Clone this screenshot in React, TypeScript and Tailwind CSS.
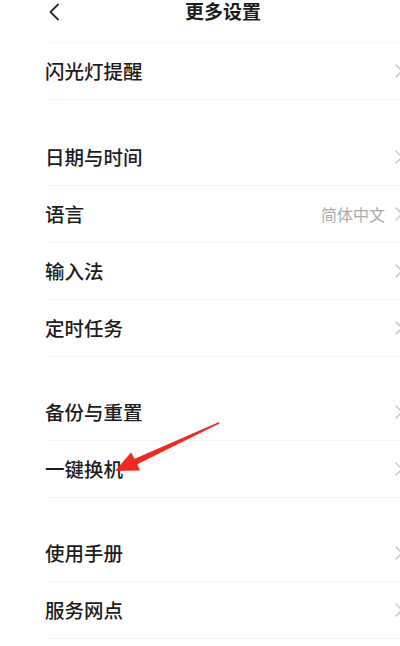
type Row = { label: string; value?: string };

const SECTIONS: Row[][] = [
  [{ label: '闪光灯提醒' }],
  [{ label: '日期与时间' }, { label: '语言', value: '简体中文' }, { label: '输入法' }, { label: '定时任务' }],
  [{ label: '备份与重置' }, { label: '一键换机' }],
  [{ label: '使用手册' }, { label: '服务网点' }]
];

const GAPS = ['h-0', 'h-[29px]', 'h-[27px]', 'h-[27px]'];

function Chevron() {
  return (
    <svg width="10" height="16" viewBox="0 0 10 16" className="mr-[-4px] shrink-0">
      <path d="M2 2 L8 8 L2 14" fill="none" stroke="#cccccc" strokeWidth="1.6" strokeLinecap="round" strokeLinejoin="round" />
    </svg>
  );
}

function SettingRow({ row }: { row: Row }) {
  return (
    <div className="flex h-[57px] items-center border-b border-[#f6f6f6]">
      <span className="text-[19.5px] font-medium leading-none text-[#1c1c1c]">{row.label}</span>
      <div className="ml-auto flex items-center gap-[9px]">
        {row.value ? <span className="text-[16px] leading-none text-[#ababab]">{row.value}</span> : null}
        <Chevron />
      </div>
    </div>
  );
}

export default function App() {
  return (
    <div
      className="relative h-[646px] w-[400px] overflow-hidden bg-white"
      style={{ fontFamily: '"Noto Sans CJK SC", "Noto Sans", sans-serif' }}
    >
      <div className="relative ml-[45px] flex h-[43px] items-start border-b border-[#f7f7f7]">
        <svg width="14" height="18" viewBox="0 0 14 18" className="mt-[3px] ml-[2px]">
          <path d="M11 1.5 L3.5 9 L11 16.5" fill="none" stroke="#2a2a2a" strokeWidth="1.8" strokeLinecap="round" strokeLinejoin="round" />
        </svg>
        <span className="absolute left-[140px] top-[1px] text-[19px] font-bold leading-[20px] text-[#1c1c1c]">更多设置</span>
      </div>

      <div className="pl-[45px]">
        {SECTIONS.map((rows, i) => (
          <div key={i}>
            <div className={GAPS[i]} />
            {rows.map((row) => (
              <SettingRow key={row.label} row={row} />
            ))}
          </div>
        ))}
      </div>

      <svg className="pointer-events-none absolute left-0 top-0" width="400" height="646" viewBox="0 0 400 646">
        <polygon
          points="219,422 134.7,458.8 131,452.5 115,471 140,470.5 137.3,464.2 219.5,423.5"
          fill="#ee2a24"
        />
      </svg>
    </div>
  );
}
